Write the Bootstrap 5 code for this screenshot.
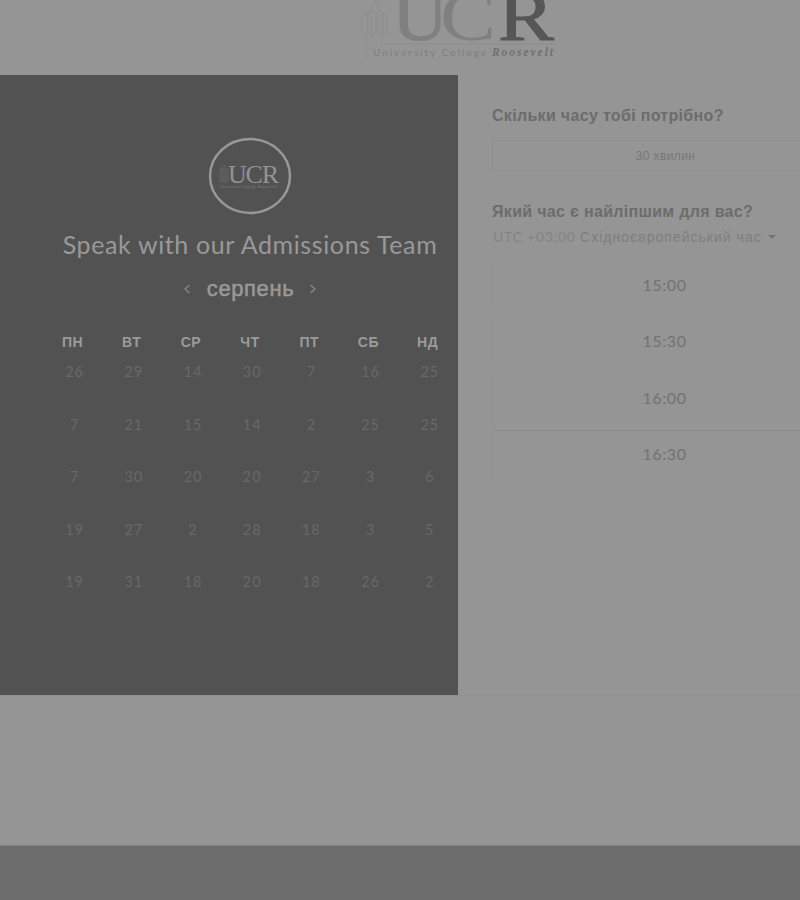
<!DOCTYPE html>
<html lang="uk">
<head>
<meta charset="utf-8">
<meta name="viewport" content="width=device-width, initial-scale=1">
<title>University College Roosevelt</title>
<link href="https://cdn.jsdelivr.net/npm/bootstrap@5.3.0/dist/css/bootstrap.min.css" rel="stylesheet">
<style>
body{background:#959595;color:#6c6c6c;font-family:"Liberation Sans",Arial,sans-serif;height:900px;overflow:hidden}
.site-head{height:75px}
.site-head svg{margin-left:356px}
.booking{height:621px;border-bottom:1px solid #909090}
.cal{width:458px;padding:62px 0 0 42px;background:#525252;color:#9a9a9a}
.cal-title{font:400 25px/30px Lato,sans-serif;margin-top:14px;letter-spacing:.62px;color:#999;white-space:nowrap}
.cal-month{font-size:22px;line-height:30px;margin-top:15px;-webkit-text-stroke:.5px #999}
.cal-month span{letter-spacing:.6px;padding:0 15px 0 16px}
.days{display:grid;grid-template-columns:repeat(7,59.2px);text-align:center}
.week{font-weight:700;font-size:14px;line-height:20px;margin-top:28px;color:#9b9b9b;letter-spacing:.6px;padding-left:1px}
.dates{font:400 14.5px/20px Lato,sans-serif;grid-auto-rows:52.6px;margin-top:10px;padding-left:3px;color:#686868;letter-spacing:.9px}
.slots{width:342px;padding:30px 0 0 34px}
.ask{font-size:16px;font-weight:700;line-height:22px;letter-spacing:.32px;white-space:nowrap}
.len{width:347px;height:31px;border:1px solid #8f8f8f;font-size:12px;margin-top:13px;color:#777;letter-spacing:.4px}
.ask-next{margin-top:30px}
.zone{font:400 14px/20px Lato,"Liberation Sans",sans-serif;color:#848484;white-space:nowrap;margin-top:4px;letter-spacing:.75px;padding-left:1px}
.zone span{font-family:"Liberation Sans",sans-serif;font-size:14px;letter-spacing:1.02px;color:#7e7e7e}
.caret{border:4px solid transparent;border-top-color:#747474;border-bottom:0;margin-left:6px}
.slot{width:345px;height:48px;border:1px solid #939393;margin-bottom:8.4px;font:400 16px/20px Lato,sans-serif;letter-spacing:.6px;color:#727272}
.slot:last-child{border-top-color:#8c8c8c}
.slot-list{padding-top:14px}
.foot{height:55px;margin-top:149px;background:#6d6d6d;border-top:1px solid #858585}
</style>
<script src="https://cdn.jsdelivr.net/npm/bootstrap@5.3.0/dist/js/bootstrap.bundle.min.js"></script>
</head>
<body>
<header class="site-head">
<svg class="d-block" width="210" height="66" viewBox="356 0 210 66" font-family="Liberation Serif,serif">
<g fill="none" stroke="#8d8d8d"><path d="M366 59V36l-4-4V14q2-6 5 0v21M372 37l-4-5V13l2-3 2 3M372 10V5l3-5 3 5v5M371 34V13l2-3 3 3v20l-3 4zM378 34V13l2-3 2 3v20l-2 3zM383 35V14q2-5 4 0v18l-6 5v7h175"/></g>
<g font-size="70" stroke-width="1">
<text x="392" y="39.500" fill="#808080" stroke="#808080" textLength="56" lengthAdjust="spacingAndGlyphs">U</text>
<text x="440" y="39.500" fill="#808080" textLength="56" lengthAdjust="spacingAndGlyphs">C</text>
<text x="498" y="39.500" fill="#565656" stroke="#565656" textLength="56" lengthAdjust="spacingAndGlyphs">R</text>
</g>
<text x="373" y="56" font-family="Lato,sans-serif" font-size="10" fill="#808080" textLength="113">University College</text>
<text x="492" y="56" font-size="11.500" font-style="italic" font-weight="700" fill="#707070" textLength="61">Roosevelt</text>
</svg>
</header>
<main class="booking d-flex">
<section class="cal flex-shrink-0">
<svg class="d-block mx-auto" width="84" height="78" viewBox="0 0 84 78">
<ellipse cx="42" cy="39" rx="40" ry="37" fill="none" stroke="#989898" stroke-width="2.500"/>
<path d="M12 45V34l2-3v15M15 45V31l2-3v18M18 45V34l2-3v14" fill="none" stroke="#656565"/>
<text x="20" y="46" font-family="Liberation Serif,serif" font-size="26" fill="#929292" textLength="51">UCR</text>
<text x="12" y="51" font-family="Lato,sans-serif" font-size="4.500" fill="#777" textLength="57">University College Roosevelt</text>
</svg>
<div class="cal-title text-center">Speak with our Admissions Team</div>
<div class="cal-month d-flex justify-content-center align-items-center">
<svg width="8" height="12" viewBox="0 0 8 12"><path d="M6.500 2L2 6l4.500 4" fill="none" stroke="#888" stroke-width="1.300"/></svg>
<span>серпень</span>
<svg width="8" height="12" viewBox="0 0 8 12"><path d="M1.500 2L6 6l-4.500 4" fill="none" stroke="#888" stroke-width="1.300"/></svg>
</div>
<div class="days week"><div>ПН</div><div>ВТ</div><div>СР</div><div>ЧТ</div><div>ПТ</div><div>СБ</div><div>НД</div></div>
<div class="days dates">
<div>26</div><div>29</div><div>14</div><div>30</div><div>7</div><div>16</div><div>25</div>
<div>7</div><div>21</div><div>15</div><div>14</div><div>2</div><div>25</div><div>25</div>
<div>7</div><div>30</div><div>20</div><div>20</div><div>27</div><div>3</div><div>6</div>
<div>19</div><div>27</div><div>2</div><div>28</div><div>18</div><div>3</div><div>5</div>
<div>19</div><div>31</div><div>18</div><div>20</div><div>18</div><div>26</div><div>2</div>
</div>
</section>
<section class="slots">
<div class="ask">Скільки часу тобі потрібно?</div>
<div class="len d-flex align-items-center justify-content-center">30 хвилин</div>
<div class="ask ask-next">Який час є найліпшим для вас?</div>
<div class="zone d-flex align-items-center">UTC +03:00&nbsp;<span>Східноєвропейський час</span><i class="caret"></i></div>
<div class="slot-list">
<div class="slot d-flex align-items-center justify-content-center">15:00</div>
<div class="slot d-flex align-items-center justify-content-center">15:30</div>
<div class="slot d-flex align-items-center justify-content-center">16:00</div>
<div class="slot d-flex align-items-center justify-content-center">16:30</div>
</div>
</section>
</main>
<footer class="foot"></footer>
</body>
</html>
